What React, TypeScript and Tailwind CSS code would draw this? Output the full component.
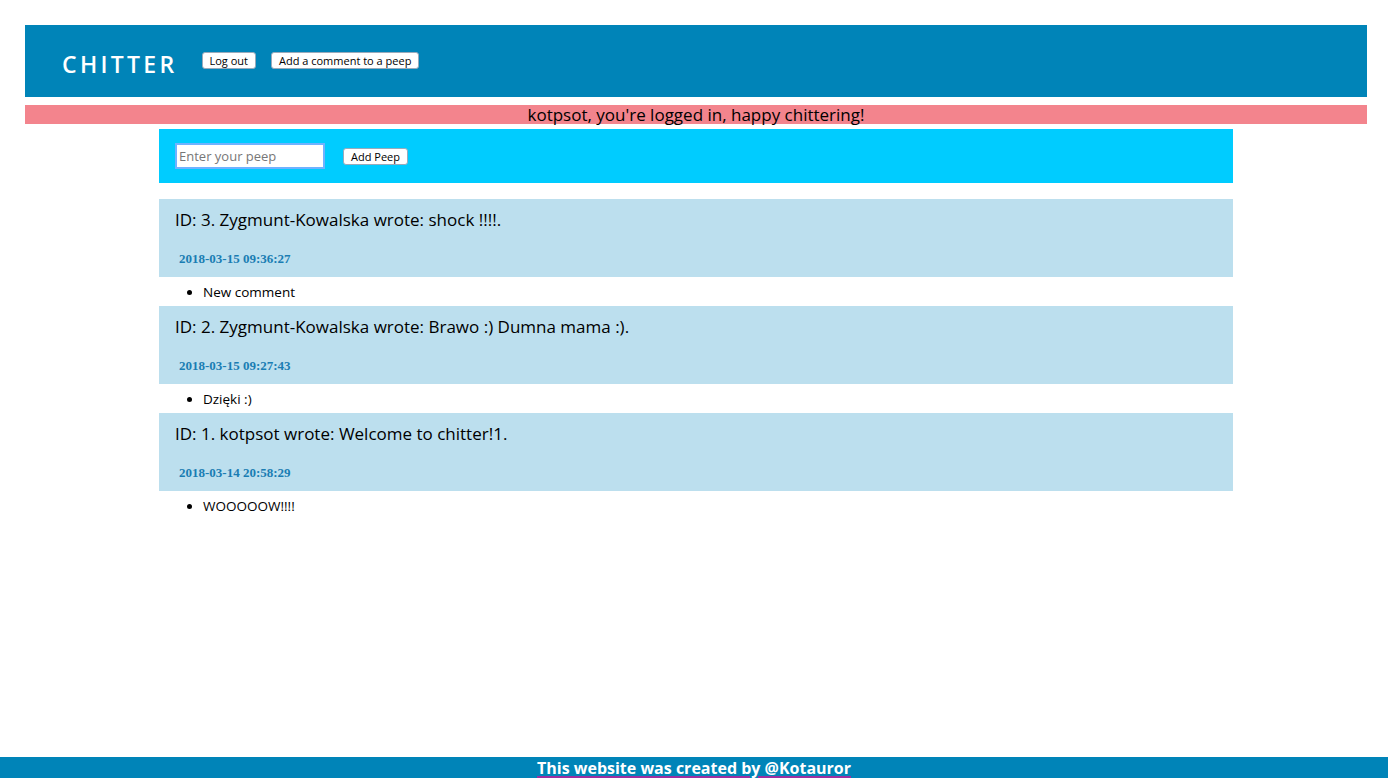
const peeps = [
  {
    id: 3,
    author: "Zygmunt-Kowalska",
    text: "shock !!!!",
    date: "2018-03-15 09:36:27",
    comments: ["New comment"],
  },
  {
    id: 2,
    author: "Zygmunt-Kowalska",
    text: "Brawo :) Dumna mama :)",
    date: "2018-03-15 09:27:43",
    comments: ["Dzięki :)"],
  },
  {
    id: 1,
    author: "kotpsot",
    text: "Welcome to chitter!1",
    date: "2018-03-14 20:58:29",
    comments: ["WOOOOOW!!!!"],
  },
];

const btn =
  "bg-white text-black text-[11px] leading-none px-[7px] py-[2px] rounded-[3px] border border-[#9ab]";

const App = () => {
  return (
    <div className="min-h-[780px] flex flex-col bg-white font-['Open_Sans',sans-serif] text-black">
      <div className="pl-[25px] pr-[21px] pt-[25px]">
        <header className="bg-[#0084b8] h-[72px] flex items-center pl-[37px] gap-[24px]">
          <h1 className="text-white text-[23px] font-semibold tracking-[3.3px] mt-[6px]">
            CHITTER
          </h1>
          <div className="flex gap-[15px] mb-[2px]">
            <button className={btn}>Log out</button>
            <button className={btn}>Add a comment to a peep</button>
          </div>
        </header>
        <div className="mt-[8px] bg-[#f3848d] h-[19px] flex items-center justify-center text-[17px] leading-none">
          kotpsot, you're logged in, happy chittering!
        </div>
      </div>

      <main className="ml-[159px] mr-[155px] mt-[5px] flex-1">
        <form className="bg-[#00ccff] h-[54px] flex items-center pl-[16px] gap-[18px]">
          <input
            placeholder="Enter your peep"
            className="w-[150px] h-[26px] bg-white border-2 border-[#6fb2ff] px-[2px] text-[13px] placeholder:text-[#777] outline-none"
          />
          <button type="button" className={btn}>
            Add Peep
          </button>
        </form>

        <div className="mt-[16px]">
          {peeps.map((peep) => (
            <div key={peep.id}>
              <div className="bg-[#bcdfee] h-[78px] pl-[16px] pt-[8px]">
                <p className="text-[17px]">
                  ID: {peep.id}. {peep.author} wrote: {peep.text}.
                </p>
                <p className="mt-[16px] ml-[4px] font-['Liberation_Serif',serif] font-bold text-[13px] text-[#1a7db3]">
                  {peep.date}
                </p>
              </div>
              <ul className="list-disc pl-[44px] h-[29px] pt-[5px] text-[13.5px]">
                {peep.comments.map((c) => (
                  <li key={c}>{c}</li>
                ))}
              </ul>
            </div>
          ))}
        </div>
      </main>

      <footer className="mt-auto mb-[2px] bg-[#0084b8] h-[21px] flex items-center justify-center">
        <a
          href="#"
          className="text-white font-bold text-[16px] leading-none underline decoration-[#9d2fa0] decoration-2 underline-offset-2"
        >
          This website was created by @Kotauror
        </a>
      </footer>
    </div>
  );
};

export default App;
